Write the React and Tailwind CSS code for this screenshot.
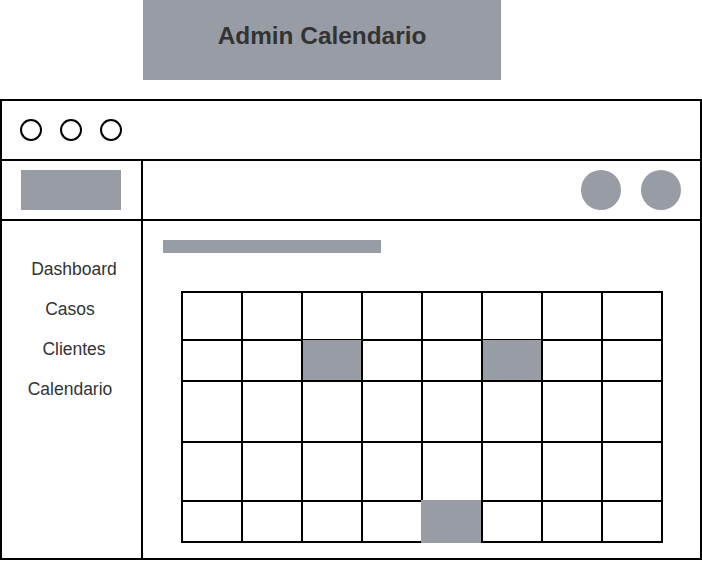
const rowHeights = ["h-[48px]", "h-[41px]", "h-[61px]", "h-[59px]", "h-[41px]"];

const filled = {
  "1-2": "absolute left-0 -top-px right-0 bottom-0 bg-[#979ca5]",
  "1-5": "absolute left-0 -top-px right-0 bottom-0 bg-[#979ca5]",
  "4-4": "absolute -left-[2px] -top-[2px] right-0 -bottom-[2px] bg-[#979ca5]",
};

const navItems = [
  { label: "Dashboard", shift: "pl-[5px]" },
  { label: "Casos", shift: "pr-[3px]" },
  { label: "Clientes", shift: "pl-[5px]" },
  { label: "Calendario", shift: "pr-[3px]" },
];

function CalendarGrid() {
  return (
    <div className="ml-[38px] mt-[38px] w-[482px] border-l-2 border-t-2 border-black">
      {rowHeights.map((h, r) => (
        <div key={r} className={`flex ${h}`}>
          {Array.from({ length: 8 }).map((_, c) => (
            <div
              key={c}
              className="relative w-[60px] h-full border-r-2 border-b-2 border-black"
            >
              {filled[`${r}-${c}`] && <div className={filled[`${r}-${c}`]} />}
            </div>
          ))}
        </div>
      ))}
    </div>
  );
}

export default function App() {
  return (
    <div
      className="w-[702px] h-[561px] bg-white overflow-hidden"
      style={{ fontFamily: '"Liberation Sans", Arial, sans-serif' }}
    >
      <div className="ml-[143px] w-[358px] h-[80px] bg-[#979ca5] flex items-center justify-center pb-[8px]">
        <h1 className="text-[24.4px] font-bold text-[#333333] leading-none">
          Admin Calendario
        </h1>
      </div>

      <div className="mt-[19px] w-[702px] h-[461px] border-2 border-black flex flex-col">
        {/* window bar */}
        <div className="h-[60px] border-b-2 border-black flex items-center pl-[18px] gap-[18px] shrink-0">
          <span className="w-[22px] h-[22px] rounded-full border-2 border-black" />
          <span className="w-[22px] h-[22px] rounded-full border-2 border-black" />
          <span className="w-[22px] h-[22px] rounded-full border-2 border-black" />
        </div>

        {/* top bar */}
        <div className="h-[60px] border-b-2 border-black flex shrink-0">
          <div className="w-[141px] border-r-2 border-black flex items-center pl-[19px]">
            <div className="w-[100px] h-[40px] bg-[#979ca5]" />
          </div>
          <div className="flex-1 flex items-center justify-end gap-[20px] pr-[19px]">
            <span className="w-[40px] h-[40px] rounded-full bg-[#979ca5]" />
            <span className="w-[40px] h-[40px] rounded-full bg-[#979ca5]" />
          </div>
        </div>

        {/* body */}
        <div className="flex-1 flex">
          <nav className="w-[141px] border-r-2 border-black pt-[28px] flex flex-col">
            {navItems.map((item) => (
              <div
                key={item.label}
                className={`h-[40px] flex items-center justify-center text-[17.5px] text-[#333333] ${item.shift}`}
              >
                {item.label}
              </div>
            ))}
          </nav>
          <main className="flex-1">
            <div className="ml-[20px] mt-[19px] w-[218px] h-[13px] bg-[#979ca5]" />
            <CalendarGrid />
          </main>
        </div>
      </div>
    </div>
  );
}
